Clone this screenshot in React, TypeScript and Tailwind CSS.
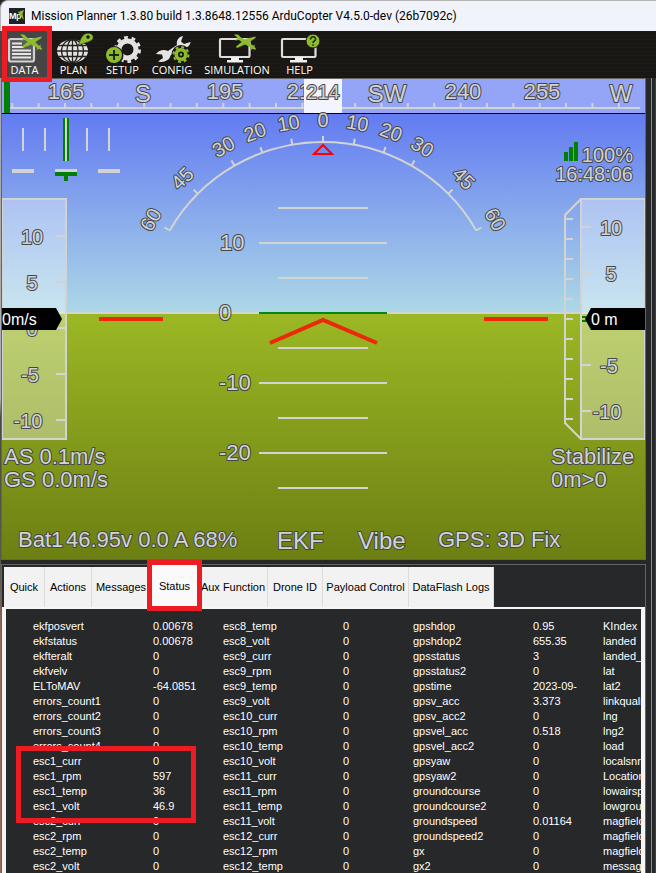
import React from "react";

const rows: string[][] = [
  ["ekfposvert", "0.00678", "esc8_temp", "0", "gpshdop", "0.95", "KIndex"],
  ["ekfstatus", "0.00678", "esc8_volt", "0", "gpshdop2", "655.35", "landed"],
  ["ekfteralt", "0", "esc9_curr", "0", "gpsstatus", "3", "landed_state"],
  ["ekfvelv", "0", "esc9_rpm", "0", "gpsstatus2", "0", "lat"],
  ["ELToMAV", "-64.0851", "esc9_temp", "0", "gpstime", "2023-09-", "lat2"],
  ["errors_count1", "0", "esc9_volt", "0", "gpsv_acc", "3.373", "linkqualitygcs"],
  ["errors_count2", "0", "esc10_curr", "0", "gpsv_acc2", "0", "lng"],
  ["errors_count3", "0", "esc10_rpm", "0", "gpsvel_acc", "0.518", "lng2"],
  ["errors_count4", "0", "esc10_temp", "0", "gpsvel_acc2", "0", "load"],
  ["esc1_curr", "0", "esc10_volt", "0", "gpsyaw", "0", "localsnrdb"],
  ["esc1_rpm", "597", "esc11_curr", "0", "gpsyaw2", "0", "Location"],
  ["esc1_temp", "36", "esc11_rpm", "0", "groundcourse", "0", "lowairspeed"],
  ["esc1_volt", "46.9", "esc11_temp", "0", "groundcourse2", "0", "lowgroundspeed"],
  ["esc2_curr", "0", "esc11_volt", "0", "groundspeed", "0.01164", "magfield"],
  ["esc2_rpm", "0", "esc12_curr", "0", "groundspeed2", "0", "magfield2"],
  ["esc2_temp", "0", "esc12_rpm", "0", "gx", "0", "magfield3"],
  ["esc2_volt", "0", "esc12_temp", "0", "gx2", "0", "message"],
];

const LIGHT = "#d3d3d3";
const GREEN = "#8dbb2e";

function Plane({ x, y }: { x: number; y: number }) {
  return (
    <g transform={`translate(${x} ${y})`} fill={GREEN}>
      <path d="M0 0.500L4 0.500L7 3.500L13.500 6.500L22 14.500L21 16L12 11L5 6L1 6.500L3.500 4Z" />
      <path d="M2 12.500L7.500 8L13 4.500L21.500 2.500L21.500 4L15.500 8L10 11L3 14Z" />
      <path d="M16 16.500L18 12.500L21 10.500L20.500 12.500L18.500 15Z" />
    </g>
  );
}

function DataIcon() {
  return (
    <svg viewBox="0 31 49 32" className="block h-8 w-[49px]">
      <rect x="9" y="39" width="25" height="22.500" rx="2" fill="#5c5c5c" stroke="#d0d0d0" strokeWidth="2.200" />
      <path d="M12 43.500H22M12 47H24M12 50.500H31M12 54H31M12 57.500H31" stroke="#e6e6e6" strokeWidth="2" />
      <Plane x={20} y={34} />
    </svg>
  );
}

function PlanIcon() {
  return (
    <svg viewBox="49 31 49 32" className="block h-8 w-[49px]">
      <ellipse cx="72.500" cy="51" rx="15.500" ry="11.500" fill="#e2e2e2" />
      <g fill="none" stroke="#25221f" strokeWidth="1.300">
        <ellipse cx="72.500" cy="51" rx="5.500" ry="11.500" />
        <ellipse cx="72.500" cy="51" rx="11" ry="11.500" />
        <path d="M72.500 39V63M57 51H88M59 45.500H86M59 56.500H86" />
      </g>
      <path d="M78 45.500 C80 42 81 35 86 33.500 C91 32.300 94 35 93 38.500 C91.500 42.500 84 42.500 78 45.500Z" fill={GREEN} stroke="#25221f" strokeWidth="0.600" />
      <circle cx="88" cy="37" r="1.800" fill="#1a1815" />
    </svg>
  );
}

function SetupIcon() {
  return (
    <svg viewBox="98 31 49 32" className="block h-8 w-[49px]">
      <circle cx="127.500" cy="49.500" r="8.500" fill="none" stroke="#e2e2e2" strokeWidth="5" />
      <circle cx="127.500" cy="49.500" r="12" fill="none" stroke="#e2e2e2" strokeWidth="3" strokeDasharray="3.770 3.770" />
      <circle cx="114" cy="55.500" r="9.500" fill="#191613" />
      <circle cx="114" cy="55" r="8" fill={GREEN} />
      <path d="M109 55H119M114 50V60" stroke="#1d2a08" strokeWidth="2" />
    </svg>
  );
}

function ConfigIcon() {
  return (
    <svg viewBox="147 31 50 32" className="block h-8 w-[50px]">
      <path
        d="M183 36 C178 37 176 41 177 45 L168 51 C164 49 159 50 156 54 L162 54.500 L163 58 L158 61.500 C164 63 170 60 170.500 55.500 L180 48 C185 49 190 47 190.500 42 L184 44 L181 41.500 Z"
        fill="#e4e4e4"
      />
      <circle cx="181" cy="54.500" r="9.500" fill="#191613" />
      <circle cx="181" cy="54.500" r="4.800" fill="none" stroke={GREEN} strokeWidth="3.600" />
      <circle cx="181" cy="54.500" r="7.500" fill="none" stroke={GREEN} strokeWidth="2" strokeDasharray="2.945 2.945" />
      <circle cx="181" cy="54.500" r="1.300" fill={GREEN} />
    </svg>
  );
}

function SimulationIcon() {
  return (
    <svg viewBox="197 31 80 32" className="block h-8 w-20">
      <rect x="220" y="39" width="29.500" height="18" rx="1" fill="none" stroke="#dedede" strokeWidth="2.200" />
      <path d="M231 57H239V60H243V62.500H227V60H231Z" fill="#f0f0f0" />
      <Plane x={234} y={34} />
    </svg>
  );
}

function HelpIcon() {
  return (
    <svg viewBox="277 31 45 32" className="block h-8 w-[45px]">
      <rect x="282" y="39" width="33.500" height="18" rx="1" fill="none" stroke="#dedede" strokeWidth="2.200" />
      <path d="M295 57H303V60H307V62.500H290V60H295Z" fill="#f0f0f0" />
      <circle cx="313" cy="41" r="7" fill={GREEN} stroke="#191613" strokeWidth="1" />
      <path d="M310.500 39.500C310.500 35.500 316 36 315.500 39.500C315.300 41 313 41 313 43M313 44.200V45.700" fill="none" stroke="#1d2a08" strokeWidth="1.600" />
    </svg>
  );
}

const tools = [
  { label: "DATA", width: "w-[49px]", icon: <DataIcon />, active: true },
  { label: "PLAN", width: "w-[49px]", icon: <PlanIcon /> },
  { label: "SETUP", width: "w-[49px]", icon: <SetupIcon /> },
  { label: "CONFIG", width: "w-[50px]", icon: <ConfigIcon /> },
  { label: "SIMULATION", width: "w-20", icon: <SimulationIcon /> },
  { label: "HELP", width: "w-[45px]", icon: <HelpIcon /> },
];

function Toolbar() {
  return (
    <nav className="flex h-[47px] shrink-0 bg-[repeating-linear-gradient(0deg,#191613_0px,#191613_2px,#1f1c19_3px,#141210_4px)]">
      {tools.map((t) => (
        <div key={t.label} className="relative">
          <button
            className={`flex h-full flex-col items-center ${t.width} ${t.active ? "bg-[#454546]" : ""} font-['Open_Sans',sans-serif] text-[11px] leading-[14px] text-white`}
          >
            {t.icon}
            <span>{t.label}</span>
          </button>
          {t.active && (
            <div className="pointer-events-none absolute -top-[5px] -bottom-1 left-0.5 z-10 w-[50px] border-5 border-[#ed1c24]" />
          )}
        </div>
      ))}
    </nav>
  );
}

type LabelProps = {
  x: number;
  y: number;
  size?: number;
  anchor?: "start" | "middle" | "end";
  rotate?: number;
  children: string;
};

function Label({ x, y, size = 22, anchor = "middle", rotate, children }: LabelProps) {
  return (
    <text
      x={x}
      y={y}
      fontSize={size}
      textAnchor={anchor}
      transform={rotate === undefined ? undefined : `rotate(${rotate} 323 319)`}
      fill={LIGHT}
      stroke="#44474a"
      strokeWidth={2}
      strokeLinejoin="round"
      paintOrder="stroke"
    >
      {children}
    </text>
  );
}

const rollMarks = [-60, -45, -30, -20, -10, 0, 10, 20, 30, 45, 60];
const headingTicks = Array.from({ length: 24 }, (_, i) => 12.3 + i * 26.37);
const climbTicks = Array.from({ length: 11 }, (_, i) => 219 + i * 20);

function Hud() {
  return (
    <svg
      viewBox="2 79 643 480"
      className="block h-auto w-full font-['Liberation_Sans',Arial,sans-serif]"
      role="img"
      aria-label="Heads-up display"
    >
      <defs>
        <linearGradient id="sky" x1="0" y1="0" x2="0" y2="1">
          <stop offset="0" stopColor="#627bf2" />
          <stop offset="1" stopColor="#add8e6" />
        </linearGradient>
        <linearGradient id="ground" x1="0" y1="0" x2="0" y2="1">
          <stop offset="0" stopColor="#9bb824" />
          <stop offset="1" stopColor="#6c7f13" />
        </linearGradient>
      </defs>
      <rect x="2" y="113" width="643" height="200" fill="url(#sky)" />
      <rect x="2" y="313" width="643" height="246" fill="url(#ground)" />

      {/* Heading tape */}
      <rect x="2" y="79" width="643" height="34" fill="#94a4f7" />
      <rect x="2" y="113" width="643" height="1" fill="#000" />
      <rect x="4" y="82" width="6" height="31" fill="#008000" />
      <rect x="10" y="107" width="630" height="2" fill={LIGHT} />
      {headingTicks.map((x) => (
        <rect key={x} x={x - 1} y="103" width="2" height="4" fill={LIGHT} />
      ))}
      <Label x={66} y={99}>165</Label>
      <Label x={143} y={102} size={24}>S</Label>
      <Label x={225} y={99}>195</Label>
      <Label x={305} y={99}>210</Label>
      <Label x={387} y={102} size={24}>SW</Label>
      <Label x={463} y={99}>240</Label>
      <Label x={542} y={99}>255</Label>
      <Label x={621} y={102} size={24}>W</Label>
      <rect x="304" y="79" width="38" height="34" fill="#f3f5fe" />
      <Label x={323} y={99} size={20}>214</Label>

      {/* Roll scale */}
      <path d="M169.700 230.500A177 177 0 0 1 476.300 230.500" fill="none" stroke={LIGHT} strokeWidth="2" />
      {rollMarks.map((a) => (
        <React.Fragment key={a}>
          <line x1="323" x2="323" y1="136" y2="142" stroke={LIGHT} strokeWidth="2" transform={`rotate(${a} 323 319)`} />
          <Label x={323} y={127} size={20} rotate={a}>{String(Math.abs(a))}</Label>
        </React.Fragment>
      ))}
      <path d="M323 145L332 154H314Z" fill="none" stroke="#ff0000" strokeWidth="2" />

      {/* Course error and slip scales */}
      <g fill={LIGHT}>
        <rect x="22" y="128" width="2" height="23" />
        <rect x="44" y="128" width="2" height="23" />
        <rect x="86" y="128" width="2" height="23" />
        <rect x="108" y="128" width="2" height="23" />
        <rect x="12" y="169" width="22" height="4" />
        <rect x="55" y="169" width="22" height="3" />
        <rect x="98" y="169" width="22" height="4" />
      </g>
      <rect x="63" y="118" width="6" height="43" fill="#008000" />
      <rect x="65" y="118" width="2" height="43" fill={LIGHT} />
      <path d="M55 172H77V176H68V181H64V176H55Z" fill="#008000" />

      {/* Pitch ladder */}
      <line x1="2" x2="645" y1="313" y2="313" stroke={LIGHT} strokeWidth="2" />
      <path d="M259 243H387M259 383H387M259 453H387M278 208H368M278 278H368M278 348H368M278 418H368M278 488H368" stroke={LIGHT} strokeWidth="2" />
      <line x1="259" x2="387" y1="313" y2="313" stroke="#008a10" strokeWidth="2" />
      <Label x={220} y={250} anchor="start">10</Label>
      <Label x={219} y={320} anchor="start">0</Label>
      <Label x={219} y={390} anchor="start">-10</Label>
      <Label x={219} y={460} anchor="start">-20</Label>
      <path d="M99 319H163M484 319H548M270 343L323 320L377 343" fill="none" stroke="#ee260a" strokeWidth="4" />

      {/* Speed tape */}
      <rect x="2" y="199" width="64" height="240" fill="#fff" fillOpacity="0.35" stroke={LIGHT} strokeWidth="2" />
      <path d="M56 236H66M56 282H66M56 328H66M56 374H66M56 420H66" stroke={LIGHT} strokeWidth="2" />
      <Label x={32} y={244} size={20}>10</Label>
      <Label x={32} y={290} size={20}>5</Label>
      <Label x={32} y={336} size={20}>0</Label>
      <Label x={30} y={382} size={20}>-5</Label>
      <Label x={28} y={428} size={20}>-10</Label>
      <path d="M2 308H56L62 319L56 330H2Z" fill="#000" />
      <text x="2" y="325" fontSize="16" fill="#fff">0m/s</text>

      {/* Altitude tape */}
      <rect x="581" y="199" width="64" height="240" fill="#fff" fillOpacity="0.35" stroke={LIGHT} strokeWidth="2" />
      <path d="M581 199L565 215V423L581 439" fill="none" stroke={LIGHT} strokeWidth="2" />
      {climbTicks.map((y) => (
        <line key={y} x1="565" x2="573" y1={y} y2={y} stroke={LIGHT} strokeWidth="2" />
      ))}
      <path d="M581 227H591M581 273H591M581 365H591M581 411H591" stroke={LIGHT} strokeWidth="2" />
      <Label x={611} y={235} size={20}>10</Label>
      <Label x={611} y={281} size={20}>5</Label>
      <Label x={609} y={373} size={20}>-5</Label>
      <Label x={607} y={419} size={20}>-10</Label>
      <path d="M582 317H588M582 321H588" stroke="#008000" strokeWidth="2" />
      <path d="M645 308H591L585 319L591 330H645Z" fill="#000" />
      <text x="591" y="325" fontSize="16" fill="#fff">0 m</text>

      {/* Link quality and clock */}
      <path d="M564 152H568V161H564ZM569 147H573V161H569ZM574 142H578V161H574Z" fill="#008000" />
      <Label x={633} y={162} size={20} anchor="end">100%</Label>
      <Label x={633} y={181} size={20} anchor="end">16:48:06</Label>

      {/* Status lines */}
      <Label x={4} y={464} anchor="start">AS 0.1m/s</Label>
      <Label x={4} y={487} anchor="start">GS 0.0m/s</Label>
      <Label x={551} y={464} anchor="start">Stabilize</Label>
      <Label x={551} y={487} anchor="start">0m&gt;0</Label>
      <Label x={18} y={547} anchor="start">Bat1</Label>
      <Label x={66} y={547} anchor="start">46.95v 0.0 A 68%</Label>
      <Label x={277} y={549} size={24} anchor="start">EKF</Label>
      <Label x={358} y={549} size={24} anchor="start">Vibe</Label>
      <Label x={438} y={547} anchor="start">GPS: 3D Fix</Label>
    </svg>
  );
}

const tabs = [
  { label: "Quick", width: "w-[41px]" },
  { label: "Actions", width: "w-[47px]" },
  { label: "Messages", width: "w-[59px]" },
  { label: "Status", width: "w-12", active: true },
  { label: "Aux Function", width: "w-[69px]" },
  { label: "Drone ID", width: "w-[55px]" },
  { label: "Payload Control", width: "w-[86px]" },
  { label: "DataFlash Logs", width: "w-[85px]" },
];

function Tabs() {
  return (
    <div role="tablist" className="flex h-[42px] items-end pl-0.5">
      {tabs.map((t) => (
        <div key={t.label} className={`relative shrink-0 ${t.width}`}>
          <button
            role="tab"
            aria-selected={!!t.active}
            className={`flex w-full items-center justify-center whitespace-nowrap border-r border-[#dcdcdc] text-[11px] leading-[15px] text-black ${t.active ? "h-[42px] bg-[#fafafa]" : "h-10 bg-[#f2f2f2]"}`}
          >
            {t.label}
          </button>
          {t.active && (
            <div className="pointer-events-none absolute -top-[5px] -right-[3px] -bottom-1 -left-1 z-10 border-5 border-[#ed1c24]" />
          )}
        </div>
      ))}
    </div>
  );
}

function StatusTable() {
  return (
    <div className="relative min-h-0 flex-1 overflow-hidden border-x-4 border-t-2 border-[#f6f6f6] bg-[#262829] pt-2.5 pl-[27px]">
      <table className="w-[760px] table-fixed text-[11px] leading-[15px] text-white">
        <colgroup>
          <col className="w-[120px]" />
          <col className="w-[70px]" />
          <col className="w-[120px]" />
          <col className="w-[70px]" />
          <col className="w-[120px]" />
          <col className="w-[70px]" />
          <col className="w-[190px]" />
        </colgroup>
        <tbody>
          {rows.map((r) => (
            <tr key={r[0]} className="h-[15px]">
              {r.map((c, i) => (
                <td key={i} className="p-0 whitespace-nowrap">{c}</td>
              ))}
            </tr>
          ))}
        </tbody>
      </table>
      <div className="pointer-events-none absolute top-[137px] left-2.5 h-[77px] w-[180px] border-5 border-[#ed1c24]" />
    </div>
  );
}

export default function App() {
  return (
    <div className="flex h-screen min-h-[480px] flex-col overflow-hidden bg-[#262829] font-['Liberation_Sans',Arial,sans-serif]">
      <header className="flex h-[31px] shrink-0 items-center gap-1.5 rounded-tl-lg border-t border-l border-[#b5b5b5] bg-[#f0f3fa] pl-2">
        <svg viewBox="0 0 16 16" className="size-4">
          <rect width="16" height="16" fill="#1e2224" />
          <text x="0" y="11" fontSize="9" fontWeight="bold" fill="#fff">M</text>
          <text x="7" y="11" fontSize="9" fontWeight="bold" fill="#dff0c0">p</text>
          <path d="M9 4L15 2L13.500 6L15 12L11.500 8Z" fill={GREEN} />
        </svg>
        <h1 className="font-[Roboto,sans-serif] text-xs whitespace-nowrap text-black">
          Mission Planner 1.3.80 build 1.3.8648.12556 ArduCopter V4.5.0-dev (26b7092c)
        </h1>
      </header>
      <Toolbar />
      <div className="flex min-h-0 flex-1">
        <div className="w-px shrink-0 bg-[linear-gradient(#a8a8a8_0px,#b0b0b0_320px,#4a4a44_340px,#5b5b50_500px,#9a6a58_560px,#9a6a58_100%)]" />
        <main className="flex min-w-0 flex-1 flex-col">
          <section className="shrink-0 border border-[#646464]">
            <Hud />
          </section>
          <section className="mt-1 flex min-h-0 flex-1 flex-col border-x border-t border-[#646464] text-white">
            <Tabs />
            <StatusTable />
          </section>
        </main>
        <aside className="flex w-2.5 shrink-0 pl-[5px]">
          <div className="w-px bg-[#8c8c8c]" />
          <div className="w-[3px]" />
          <div className="w-px bg-[#39433f]" />
        </aside>
      </div>
    </div>
  );
}
